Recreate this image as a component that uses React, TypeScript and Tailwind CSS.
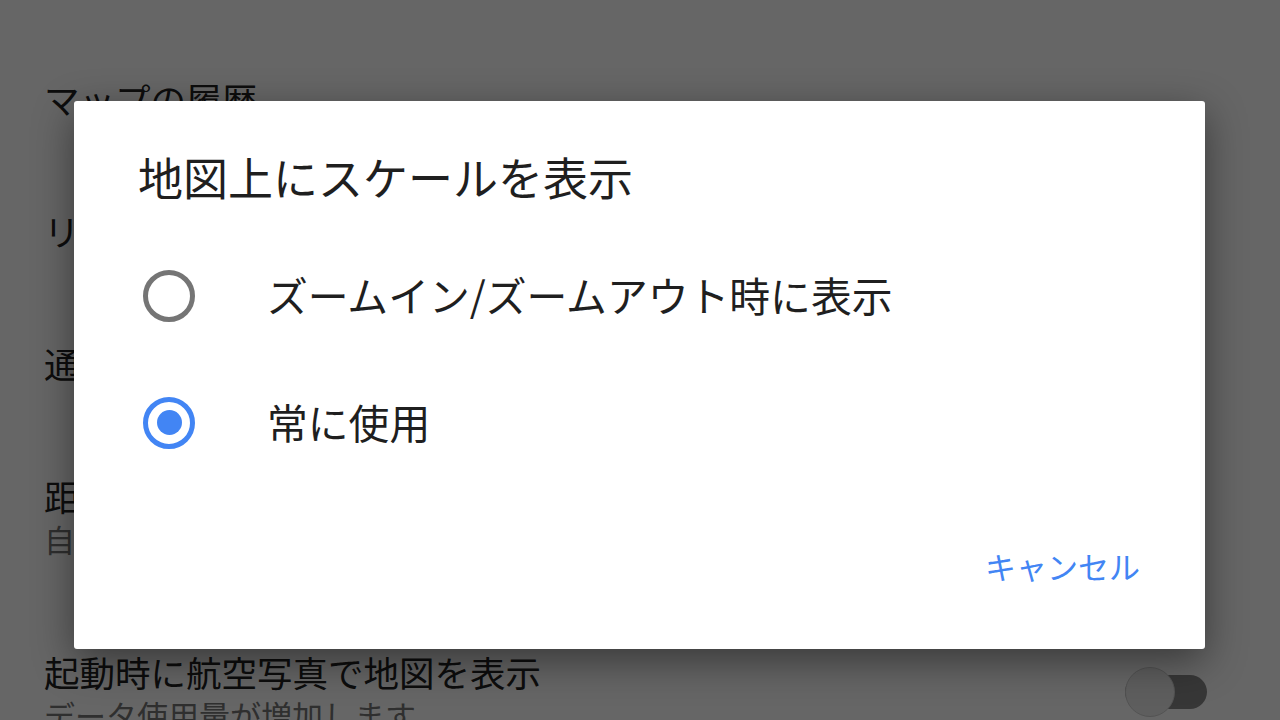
import React from "react";

interface SettingRow {
  title: string;
  subtitle?: string;
}

const rows: SettingRow[] = [
  { title: "マップの履歴" },
  { title: "リンクされたアカウント" },
  { title: "通知" },
  { title: "距離の単位", subtitle: "自動" },
  { title: "起動時に航空写真で地図を表示", subtitle: "データ使用量が増加します" },
];

const options = ["ズームイン/ズームアウト時に表示", "常に使用"];

const Radio: React.FC<{ checked: boolean }> = ({ checked }) =>
  checked ? (
    <span className="flex h-[52px] w-[52px] items-center justify-center rounded-full border-[5px] border-[#4285f4]">
      <span className="h-[25px] w-[25px] rounded-full bg-[#4285f4]" />
    </span>
  ) : (
    <span className="h-[52px] w-[52px] rounded-full border-[5px] border-[#757575]" />
  );

const App: React.FC = () => {
  const selected = 1;

  return (
    <div
      className="relative h-[720px] w-[1280px] overflow-hidden bg-white"
      style={{ fontFamily: '"Noto Sans CJK JP", "Noto Sans", sans-serif' }}
    >
      {/* settings list underneath */}
      <div className="flex flex-col pl-[44px] pt-[33px] text-[#212121]">
        {rows.map((row) => (
          <div
            key={row.title}
            className={`flex flex-col justify-center ${row.subtitle ? "h-[176px]" : "h-[132px]"}`}
          >
            <div className="text-[35.5px] leading-[44px]">{row.title}</div>
            {row.subtitle && (
              <div className="text-[31px] leading-[42px] text-[#757575]">{row.subtitle}</div>
            )}
          </div>
        ))}
      </div>

      {/* toggle on last row */}
      <div className="absolute left-[1125px] top-[667px] flex items-center">
        <div className="mt-[8px] h-[34px] w-[82px] rounded-full bg-[#8a8a8a]" />
        <div className="absolute left-0 top-0 h-[50px] w-[50px] rounded-full border border-[#cfcfcf] bg-[#ececec]" />
      </div>

      {/* scrim */}
      <div className="absolute inset-0 bg-black/[0.6]" />

      {/* dialog */}
      <div className="absolute left-[74px] top-[101px] flex h-[548px] w-[1131px] flex-col rounded-[3px] bg-white shadow-[0_12px_40px_rgba(0,0,0,0.45)]">
        <h2 className="pl-[64px] pt-[53px] text-[45px] leading-[45px] text-[#1f1f1f]">
          地図上にスケールを表示
        </h2>

        <div className="mt-[33px] flex flex-col">
          {options.map((opt, i) => (
            <div key={opt} className="flex h-[127px] items-center pl-[69px]">
              <Radio checked={i === selected} />
              <span className="ml-[72px] text-[40.8px] leading-none text-[#1f1f1f]">{opt}</span>
            </div>
          ))}
        </div>

        <div className="mt-[39px] flex h-[80px] items-center justify-end pr-[65px]">
          <button className="text-[31px] leading-none text-[#4285f4]">キャンセル</button>
        </div>
      </div>
    </div>
  );
};

export default App;
